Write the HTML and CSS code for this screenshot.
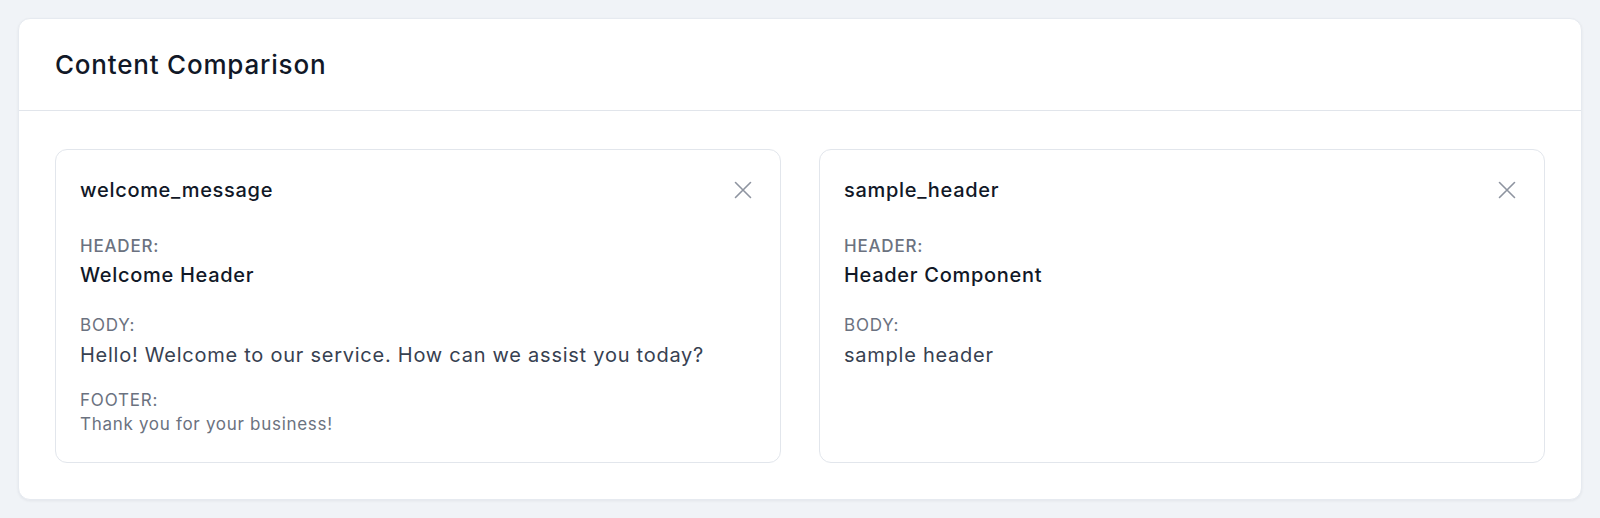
FILE: index.html
```html
<!DOCTYPE html>
<html lang="en">
<head>
<meta charset="UTF-8" />
<meta name="viewport" content="width=device-width, initial-scale=1" />
<title>Content Comparison</title>
<link rel="stylesheet" href="styles.css">
</head>
<body>
  <div class="panel">
    <div class="panel-header">
      <h2>Content Comparison</h2>
    </div>
    <div class="panel-body">
      <div class="item">
        <div class="item-head">
          <span class="item-name">welcome_message</span>
          <button class="remove" title="Remove">
            <svg viewBox="0 0 24 24" width="24" height="24"><path d="M4.5 4.5l15 15M19.5 4.5l-15 15" /></svg>
          </button>
        </div>
        <div class="field field-header">
          <div class="label">Header:</div>
          <div class="value-header">Welcome Header</div>
        </div>
        <div class="field field-body">
          <div class="label">Body:</div>
          <div class="value-body">Hello! Welcome to our service. How can we assist you today?</div>
        </div>
        <div class="field field-footer">
          <div class="label">Footer:</div>
          <div class="value-footer">Thank you for your business!</div>
        </div>
      </div>

      <div class="item">
        <div class="item-head">
          <span class="item-name">sample_header</span>
          <button class="remove" title="Remove">
            <svg viewBox="0 0 24 24" width="24" height="24"><path d="M4.5 4.5l15 15M19.5 4.5l-15 15" /></svg>
          </button>
        </div>
        <div class="field field-header">
          <div class="label">Header:</div>
          <div class="value-header">Header Component</div>
        </div>
        <div class="field field-body">
          <div class="label">Body:</div>
          <div class="value-body">sample header</div>
        </div>
      </div>
    </div>
  </div>
</body>
</html>
```

FILE: styles.css
```css
body {
  margin: 0;
  padding: 18px;
  background: #f0f3f7;
  font-family: Inter, "Noto Sans", sans-serif;
  color: #111827;
}
.panel {
  background: #fff;
  border: 1px solid #e6eaf0;
  border-radius: 12px;
  box-shadow: 0 1px 3px rgba(15, 23, 42, 0.06);
}
.panel-header {
  height: 91px;
  padding: 0 36px;
  display: flex;
  align-items: center;
  border-bottom: 1px solid #e1e5eb;
}
.panel-header h2 {
  margin: 0;
  font-size: 26px;
  font-weight: 500;
  letter-spacing: 0.8px;
  color: #111827;
}
.panel-body {
  display: grid;
  grid-template-columns: 1fr 1fr;
  gap: 38px;
  padding: 38px 36px 36px;
}
.item {
  border: 1px solid #e2e6ec;
  border-radius: 12px;
  padding: 24px 24px 26px;
}
.item-head {
  display: flex;
  justify-content: space-between;
  align-items: center;
  height: 32px;
  margin-bottom: 28px;
}
.item-name {
  font-size: 20px;
  font-weight: 500;
  letter-spacing: 0.7px;
  color: #111827;
}
.remove {
  background: none;
  border: none;
  padding: 0;
  margin-right: 1px;
  cursor: pointer;
  display: flex;
}
.remove svg {
  fill: none;
  stroke: #8e94a0;
  stroke-width: 1.6;
  stroke-linecap: round;
}
.label {
  font-size: 17px;
  line-height: 24px;
  letter-spacing: 0.8px;
  text-transform: uppercase;
  color: #6b7280;
}
.field-header .label {
  font-weight: 500;
}
.value-header {
  margin-top: 2px;
  font-size: 20px;
  line-height: 30px;
  font-weight: 500;
  letter-spacing: 0.7px;
  color: #111827;
}
.value-body {
  margin-top: 3px;
  font-size: 20px;
  line-height: 30px;
  letter-spacing: 0.75px;
  color: #374151;
}
.value-footer {
  font-size: 17px;
  line-height: 24px;
  letter-spacing: 0.7px;
  color: #6b7280;
}
.field-body {
  margin-top: 23px;
}
.field-footer {
  margin-top: 18px;
}
```
